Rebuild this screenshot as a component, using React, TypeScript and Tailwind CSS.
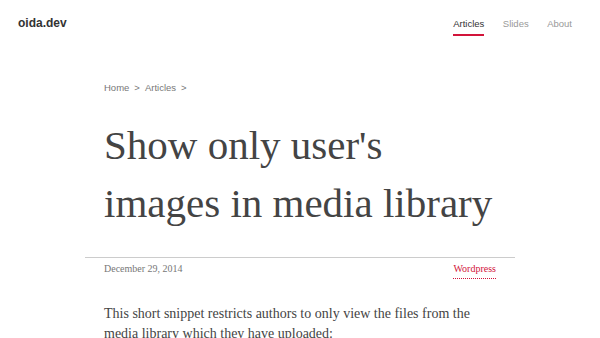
export default function App() {
  return (
    <div className="min-h-screen bg-white font-['Liberation_Sans',Arial,sans-serif]">
      <header className="flex items-start justify-between h-[60px] pl-[18px] pr-[28px]">
        <a className="mt-[14px] text-[12px] font-bold text-[#333]">oida.dev</a>
        <nav className="flex gap-[18.5px] mt-[16.6px] text-[9.5px]">
          <div className="flex flex-col items-center">
            <span className="text-[#333]">Articles</span>
            <span className="mt-[3px] h-[2.5px] w-full bg-[#d2143a]" />
          </div>
          <span className="text-[#999]">Slides</span>
          <span className="text-[#999]">About</span>
        </nav>
      </header>
      <main className="mx-auto w-[430px]">
        <div className="px-[19px]">
          <div className="mt-[20.6px] flex gap-[5px] text-[9.5px] text-[#777]">
            <span>Home</span>
            <span>&gt;</span>
            <span>Articles</span>
            <span>&gt;</span>
          </div>
          <h1 className="mt-[21px] text-[41px] leading-[58px] text-[#444] font-['Liberation_Serif',serif]">
            Show only user's images in media library
          </h1>
        </div>
        <div className="mt-[25px] border-t border-[#ccc]" />
        <div className="px-[19px] flex justify-between items-start mt-[3px] text-[10px] font-['Liberation_Serif',serif]">
          <span className="text-[#777]">December 29, 2014</span>
          <span className="pb-[2px] text-[#d2143a] border-b border-dotted border-[#d2143a]">Wordpress</span>
        </div>
        <p className="pl-[19px] pr-[32px] mt-[25px] text-[14px] leading-[20px] text-[#444] font-['Liberation_Serif',serif]">
          This short snippet restricts authors to only view the files from the media library which they have uploaded:
        </p>
      </main>
    </div>
  );
}
